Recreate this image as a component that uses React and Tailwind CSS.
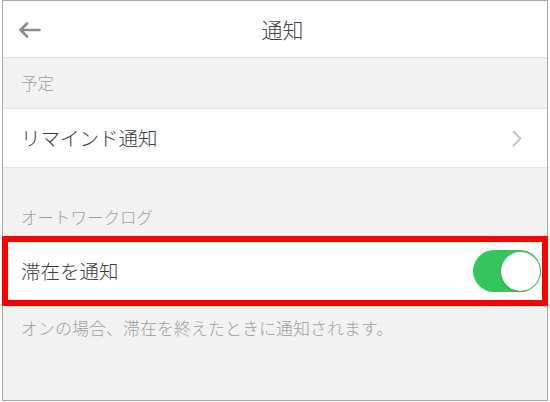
import React from 'react'

function BackArrow() {
  return (
    <svg width="23" height="16" viewBox="0 0 23 16" fill="none" stroke="#8a8a8a" strokeWidth="2.6" strokeLinecap="round" strokeLinejoin="round">
      <path d="M21.5 8H2.5M9 1.5L2.5 8L9 14.5" />
    </svg>
  )
}

function Chevron() {
  return (
    <svg width="10" height="17" viewBox="0 0 10 17" fill="none" stroke="#c5c5c8" strokeWidth="2" strokeLinecap="round" strokeLinejoin="round">
      <path d="M1.5 1.5L8.5 8.5L1.5 15.5" />
    </svg>
  )
}

function Toggle() {
  return (
    <div className="w-[68px] h-[42px] rounded-full bg-[#34c65a] flex items-center justify-end p-[1.5px]">
      <div className="w-[39px] h-[39px] rounded-full bg-white shadow-[0_1px_2px_rgba(0,0,0,0.25)]" />
    </div>
  )
}

export default function App() {
  return (
    <div
      className="w-[550px] h-[402px] bg-white font-light"
      style={{ fontFamily: '"Noto Sans CJK JP", "Noto Sans", sans-serif' }}
    >
      <div className="ml-[2px] w-[546px] h-[401px] border border-[#a8a8a8] bg-[#f2f2f2] flex flex-col">
        <div className="h-[57px] shrink-0 bg-white border-b border-[#dedede] grid grid-cols-[1fr_auto_1fr] items-center pl-[15px]">
          <div className="flex items-center pt-[2px]">
            <BackArrow />
          </div>
          <div className="text-[21px] leading-[28px] text-[#444]">通知</div>
          <div />
        </div>

        <div className="h-[51px] shrink-0 border-b border-[#e2e2e2] flex items-center pl-[18px] text-[16.5px] text-[#9e9e9e]">
          予定
        </div>

        <div className="h-[59px] shrink-0 bg-white border-b border-[#e6e6e6] flex items-center justify-between pl-[18px] pr-[25px]">
          <span className="text-[19.5px] text-[#3c3c3c]">リマインド通知</span>
          <Chevron />
        </div>

        <div className="h-[68px] shrink-0 flex items-end pb-[7px] pl-[18px] text-[16.5px] leading-[24px] text-[#9e9e9e]">
          オートワークログ
        </div>

        <div className="-mx-px h-[70px] shrink-0 border-[6px] border-[#ff0000] bg-white flex items-center justify-between pl-[13px] pr-[1px]">
          <span className="text-[19.5px] text-[#3c3c3c]">滞在を通知</span>
          <Toggle />
        </div>

        <div className="pt-[10px] pl-[18px] text-[17px] leading-[24px] text-[#9e9e9e]">
          オンの場合、滞在を終えたときに通知されます。
        </div>
      </div>
    </div>
  )
}
